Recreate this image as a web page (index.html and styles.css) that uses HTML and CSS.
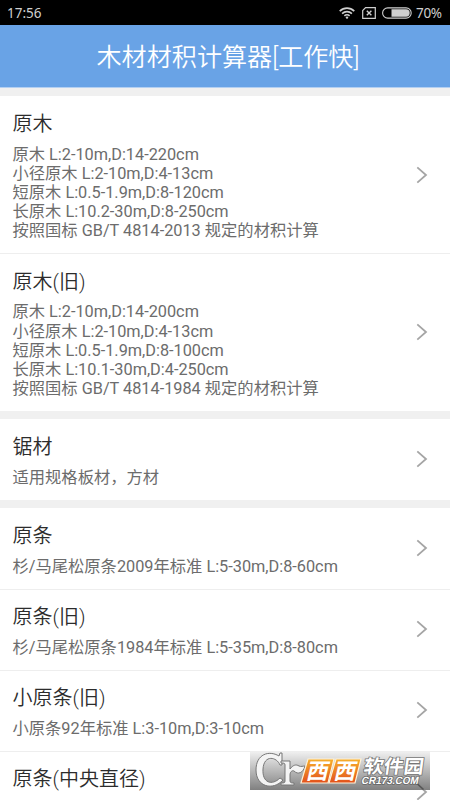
FILE: index.html
```html
<!DOCTYPE html>
<html lang="zh-CN">
<head>
<meta charset="utf-8">
<meta name="viewport" content="width=device-width, initial-scale=1">
<title>木材材积计算器</title>
<link rel="stylesheet" href="styles.css">
</head>
<body>
<div class="status">
  <span class="time">17:56</span>
  <svg class="wifi" width="16" height="12" viewBox="0 0 16 12" fill="none" stroke="#cfcfcf" stroke-width="1.6"><path d="M.7 4.2C5 .1 11 .1 15.3 4.2M3.1 6.6c2.8-2.7 7-2.7 9.8 0M5.4 8.9c1.5-1.5 3.7-1.5 5.2 0"/><circle cx="8" cy="10.6" r="1.2" fill="#cfcfcf" stroke="none"/></svg>
  <svg class="sim" width="14" height="12" viewBox="0 0 14 12" fill="none" stroke="#cfcfcf"><path d="M3.6.7h9.7v10.6H.7V3.6z" stroke-width="1.2"/><path d="M4.8 3.8l4.6 4.4M9.4 3.8L4.8 8.2" stroke-width="1.4"/></svg>
  <svg class="battery" width="30" height="12" viewBox="0 0 30 12"><rect x=".6" y=".9" width="28.6" height="10.2" rx="5.1" fill="none" stroke="#cfcfcf" stroke-width="1.1"/><path d="M9.5 2.3H24a3.7 3.7 0 0 1 0 7.4H9.5z" fill="#cfcfcf"/></svg>
  <span class="percent">70%</span>
</div>
<header class="header"><h1>木材材积计算器[工作快]</h1></header>
<main class="list">
  <section class="group">
    <article class="row">
      <div class="text"><h2>原木</h2><p>原木 L:2-10m,D:14-220cm<br>小径原木 L:2-10m,D:4-13cm<br>短原木 L:0.5-1.9m,D:8-120cm<br>长原木 L:10.2-30m,D:8-250cm<br>按照国标 GB/T 4814-2013 规定的材积计算</p></div>
      <svg class="chevron" viewBox="0 0 12 18"><path d="M1.3 1.3L10 9l-8.7 7.7"/></svg>
    </article>
    <article class="row">
      <div class="text"><h2>原木(旧)</h2><p>原木 L:2-10m,D:14-200cm<br>小径原木 L:2-10m,D:4-13cm<br>短原木 L:0.5-1.9m,D:8-100cm<br>长原木 L:10.1-30m,D:4-250cm<br>按照国标 GB/T 4814-1984 规定的材积计算</p></div>
      <svg class="chevron" viewBox="0 0 12 18"><path d="M1.3 1.3L10 9l-8.7 7.7"/></svg>
    </article>
  </section>
  <section class="group">
    <article class="row">
      <div class="text"><h2>锯材</h2><p>适用规格板材，方材</p></div>
      <svg class="chevron" viewBox="0 0 12 18"><path d="M1.3 1.3L10 9l-8.7 7.7"/></svg>
    </article>
  </section>
  <section class="group">
    <article class="row">
      <div class="text"><h2>原条</h2><p>杉/马尾松原条2009年标准 L:5-30m,D:8-60cm</p></div>
      <svg class="chevron" viewBox="0 0 12 18"><path d="M1.3 1.3L10 9l-8.7 7.7"/></svg>
    </article>
    <article class="row">
      <div class="text"><h2>原条(旧)</h2><p>杉/马尾松原条1984年标准 L:5-35m,D:8-80cm</p></div>
      <svg class="chevron" viewBox="0 0 12 18"><path d="M1.3 1.3L10 9l-8.7 7.7"/></svg>
    </article>
    <article class="row">
      <div class="text"><h2>小原条(旧)</h2><p>小原条92年标准 L:3-10m,D:3-10cm</p></div>
      <svg class="chevron" viewBox="0 0 12 18"><path d="M1.3 1.3L10 9l-8.7 7.7"/></svg>
    </article>
    <article class="row">
      <div class="text"><h2>原条(中央直径)</h2><p>&nbsp;</p></div>
      <svg class="chevron" viewBox="0 0 12 18"><path d="M1.3 1.3L10 9l-8.7 7.7"/></svg>
    </article>
  </section>
</main>
<svg class="watermark" width="180" height="38" viewBox="0 0 180 38">
  <defs>
    <linearGradient id="bar" x2="0" y2="1"><stop stop-color="#efefef"/><stop offset="1" stop-color="#808080"/></linearGradient>
    <linearGradient id="fire" gradientUnits="userSpaceOnUse" x1="0" y1="7" x2="0" y2="31"><stop stop-color="#f7b02c"/><stop offset="1" stop-color="#e2501c"/></linearGradient>
  </defs>
  <rect width="180" height="38" fill="url(#bar)"/>
  <g fill="#f4f4f4" stroke="#777" stroke-width="1" stroke-linejoin="round">
    <path d="M32 1v12h-2C27 5 14 2 13 17c-1 14 9 17 17 9l3 2C23 39 6 35 6 18 6 2 19-2 29 4l1-3z"/>
    <path d="M31 9h9v8c3-4 6-5 9-3 2 1 4 0 6 0-2 7-7 9-11 5-2-1-4 1-4 4v6c0 2 2 2 4 2v2H31v-2c3 0 4 0 4-2V13c0-2-1-2-4-2z"/>
  </g>
  <g fill="url(#fire)" stroke="#fff2d8" stroke-width="1.2"><path d="M58 7h26l-6 24H51z"/><path d="M86 7h25l-6 24H79z"/></g>
  <g class="mark" transform="translate(55.5 26.5) skewX(-13)"><text x="0" y="0">西</text><text x="27.5" y="0">西</text></g>
  <g transform="translate(113 21) skewX(-8)"><text class="park" textLength="60" lengthAdjust="spacingAndGlyphs">软件园</text></g>
  <g transform="translate(111 31.5) skewX(-12)"><text class="domain" textLength="57" lengthAdjust="spacingAndGlyphs">CR173.COM</text></g>
  <path d="M167.5 32l6 5.5" stroke="#555" stroke-width="1.6"/>
</svg>
</body>
</html>
```
FILE: styles.css
```css
* { box-sizing: border-box; }
body {
  margin: 0;
  height: 800px;
  overflow: hidden;
  position: relative;
  background: #f0f0f0;
  font-family: Roboto, "Noto Sans CJK SC", sans-serif;
}
.status {
  height: 25px;
  padding: 0 8px 0 7px;
  display: flex;
  align-items: center;
  background: #000;
  color: #cfcfcf;
  font-size: 14px;
}
.time { margin-right: auto; font-family: "Noto Sans", sans-serif; font-size: 13.5px; }
.wifi { margin-right: 7px; }
.sim { margin-right: 6px; }
.battery { margin-right: 4px; }
.percent { width: 26px; font-family: "Noto Sans", sans-serif; font-size: 13.5px; letter-spacing: -.3px; }
.header {
  height: 63px;
  display: flex;
  align-items: center;
  justify-content: center;
  background: #69a3e6;
  border-bottom: 1px solid #b4d0f2;
}
h1 {
  margin: 0;
  padding: 4px 0 0 6px;
  color: #fff;
  font-size: 25.1px;
  font-weight: 350;
  line-height: 36px;
}
.list { padding-top: 8px; display: flex; flex-direction: column; gap: 8px; }
.group { background: #fff; }
.row {
  display: flex;
  align-items: center;
  padding: 13.375px 22px 12.9px 12.5px;
}
.row + .row { border-top: 1px solid #eee; padding-top: 12.575px; }
.text { flex: 1; }
h2 {
  margin: 0;
  padding-top: 1px;
  color: #2c2c2c;
  font-size: 20px;
  font-weight: 350;
  line-height: 28px;
}
p {
  margin: 6.5px 0 0;
  color: #6c6c6c;
  font-size: 16.3px;
  line-height: 19.125px;
  white-space: nowrap;
}
.chevron {
  width: 12px;
  height: 18px;
  margin-bottom: .5px;
  fill: none;
  stroke: #a5a5a5;
  stroke-width: 1.8;
}
.watermark { position: absolute; left: 250px; top: 752px; }
.mark {
  fill: #fff;
  font: 700 22px "Noto Sans CJK SC", sans-serif;
}
.park {
  fill: #fff;
  stroke: #777;
  stroke-width: 1.6;
  paint-order: stroke;
  font: 700 18.5px "Noto Sans CJK SC", sans-serif;
}
.domain {
  fill: #fff;
  stroke: #666;
  stroke-width: 1.5;
  paint-order: stroke;
  font: 700 10.5px "Liberation Sans", sans-serif;
}
```
